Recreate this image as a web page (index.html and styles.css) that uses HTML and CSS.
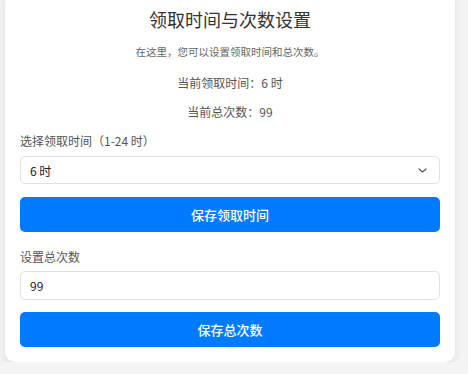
FILE: index.html
```html
<!DOCTYPE html>
<html lang="zh-CN">
<head>
    <meta charset="UTF-8">
    <meta name="viewport" content="width=device-width, initial-scale=1.0">
    <title>领取时间与次数设置</title>
    <link rel="stylesheet" href="styles.css">
</head>
<body>
    <div class="card">
        <h2 class="title">领取时间与次数设置</h2>
        <p class="desc">在这里，您可以设置领取时间和总次数。</p>
        <p class="info">当前领取时间：<span id="curTime">6</span> 时</p>
        <p class="info last">当前总次数：<span id="curCount">99</span></p>

        <label class="label" for="timeSelect">选择领取时间（1-24 时）</label>
        <div class="select-wrap">
            <select id="timeSelect" class="field">
                <option>1 时</option>
                <option>2 时</option>
                <option>3 时</option>
                <option>4 时</option>
                <option>5 时</option>
                <option selected>6 时</option>
                <option>7 时</option>
                <option>8 时</option>
                <option>12 时</option>
                <option>24 时</option>
            </select>
            <svg class="arrow" width="9" height="5" viewBox="0 0 9 5">
                <path d="M1 1l3.5 3 3.5-3" fill="none" stroke="#555" stroke-width="1.2" stroke-linecap="round" stroke-linejoin="round"/>
            </svg>
        </div>
        <button class="btn">保存领取时间</button>

        <label class="label second" for="countInput">设置总次数</label>
        <input id="countInput" class="field" type="number" value="99">
        <button class="btn">保存总次数</button>
    </div>
</body>
</html>
```

FILE: styles.css
```css
* {
    margin: 0;
    padding: 0;
    box-sizing: border-box;
    font-family: "Noto Sans CJK SC", "Noto Sans", sans-serif;
}
body {
    background-color: #f4f4f4;
}
.card {
    width: 450px;
    margin: -10px 0 0 5px;
    padding: 17px 15px 15px;
    background: #fff;
    border-radius: 10px;
    box-shadow: 0 2px 10px rgba(0, 0, 0, 0.1);
}
.title {
    font-size: 18px;
    line-height: 24px;
    font-weight: 400;
    color: #333;
    text-align: center;
}
.desc {
    margin-top: 13px;
    font-size: 10.5px;
    line-height: 16px;
    color: #666;
    text-align: center;
}
.info {
    margin-top: 11px;
    font-size: 12px;
    line-height: 18px;
    color: #555;
    text-align: center;
}
.desc + .info {
    margin-top: 14px;
}
.info.last {
    margin-bottom: 11px;
}
.label {
    display: block;
    font-size: 12px;
    line-height: 18px;
    color: #555;
    margin-bottom: 6px;
}
.label.second {
    margin-top: 16px;
    margin-bottom: 5px;
}
.select-wrap {
    position: relative;
}
.field {
    display: block;
    width: 100%;
    height: 28px;
    padding: 0 9px;
    border: 1px solid #e0e0e4;
    border-radius: 5px;
    background: #fff;
    font-size: 12px;
    color: #222;
    outline: none;
    appearance: none;
    -moz-appearance: textfield;
}
input.field {
    height: 29px;
}
input.field::-webkit-inner-spin-button,
input.field::-webkit-outer-spin-button {
    -webkit-appearance: none;
}
.arrow {
    position: absolute;
    right: 13px;
    top: 12px;
    pointer-events: none;
}
.btn {
    display: block;
    width: 100%;
    height: 35px;
    margin-top: 13px;
    border: none;
    border-radius: 5px;
    background: #007bff;
    color: #fff;
    font-size: 13px;
    font-weight: 500;
    cursor: pointer;
}
input.field + .btn {
    margin-top: 12px;
}
```
